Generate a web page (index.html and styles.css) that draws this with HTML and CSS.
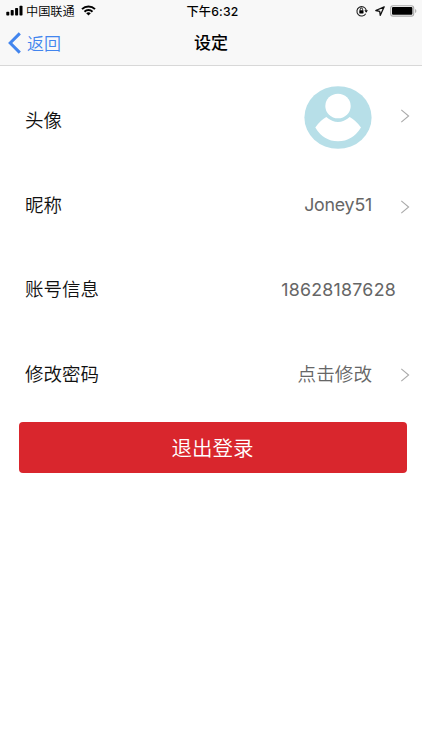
FILE: index.html
```html
<!DOCTYPE html>
<html lang="zh-CN">
<head>
<meta charset="utf-8">
<title>设定</title>
<link rel="stylesheet" href="styles.css">
</head>
<body>
<header class="header">
  <div class="status">
    <div class="status-left">
      <svg class="signal" width="17" height="11" viewBox="0 0 17 11"><rect x="0.3" y="6.7" width="3" height="3.8" rx=".7"/><rect x="4.7" y="5.1" width="3" height="5.4" rx=".7"/><rect x="9.1" y="3.1" width="3" height="7.4" rx=".7"/><rect x="13.5" y="0.8" width="3" height="9.7" rx=".7"/></svg>
      <span class="carrier">中国联通</span>
      <svg class="wifi" width="15" height="11" viewBox="0 0 15 11"><g fill="none" stroke="#000" stroke-width="2"><path d="M1 4.1a9.3 9.3 0 0 1 13 0"/><path d="M3.5 6.7a5.7 5.7 0 0 1 8 0"/></g><path d="M5.2 8.3a3.3 3.3 0 0 1 4.6 0L7.5 10.6z"/></svg>
    </div>
    <div class="time">下午6:32</div>
    <div class="status-right">
      <svg width="12" height="12" viewBox="0 0 12 12"><path d="M9.7 8.7A4.7 4.7 0 1 1 10.2 5.2" fill="none" stroke="#222" stroke-width="1.1"/><path d="M8.4 5.2h3.5l-1.7 2.5z"/><rect x="3.3" y="5.2" width="4.2" height="3.2" rx=".4"/><path d="M4.2 5.4V4.3a1.2 1.2 0 0 1 2.4 0v1.1" fill="none" stroke="#000" stroke-width=".9"/></svg>
      <svg class="location" width="10" height="10" viewBox="0 0 10 10"><path d="M9.2 .8L.8 4.5l3.9.9.6 3.9z" fill="none" stroke="#111" stroke-width="1.3" stroke-linejoin="round"/></svg>
      <svg class="battery" width="28" height="12" viewBox="0 0 28 12"><rect x=".7" y=".7" width="23" height="10.4" rx="2.4" fill="none" stroke="#aaa" stroke-width="1.1"/><rect x="2" y="2" width="20.4" height="7.8" rx="1"/><path d="M25.1 4v4q1.3-.6 1.3-2t-1.3-2z" fill="#aaa"/></svg>
    </div>
  </div>
  <nav class="nav">
    <div class="back"><svg width="13" height="22" viewBox="0 0 13 22"><path d="M11.8 1.4L2.2 11l9.6 9.6" fill="none" stroke="#4285ee" stroke-width="3"/></svg><span>返回</span></div>
    <h1 class="title">设定</h1>
    <div></div>
  </nav>
</header>
<main class="main">
  <div class="row row-avatar">
    <span class="label">头像</span>
    <svg class="avatar" width="68" height="63" viewBox="0 0 68 63"><ellipse cx="34" cy="31.5" rx="33.6" ry="31.3" fill="#b7dfe8"/><path d="M11.3 41.5Q16 34.5 22.3 31Q34 41 45.7 31Q52 34.5 57 41.5Q48.5 55.3 34 55.3T11.3 41.5z" fill="#fff"/><ellipse cx="34" cy="20.2" rx="14.7" ry="15" fill="#b7dfe8"/><ellipse cx="34" cy="20" rx="12.7" ry="12.3" fill="#fff"/></svg>
    <svg class="chevron" width="10" height="14" viewBox="0 0 10 14"><path d="M1.3 .8l7.3 6.2L1.3 13.2"/></svg>
  </div>
  <div class="row">
    <span class="label">昵称</span>
    <span class="value latin">Joney51</span>
    <svg class="chevron" width="10" height="14" viewBox="0 0 10 14"><path d="M1.3 .8l7.3 6.2L1.3 13.2"/></svg>
  </div>
  <div class="row">
    <span class="label">账号信息</span>
    <span class="value latin phone">18628187628</span>
  </div>
  <div class="row">
    <span class="label">修改密码</span>
    <span class="value">点击修改</span>
    <svg class="chevron" width="10" height="14" viewBox="0 0 10 14"><path d="M1.3 .8l7.3 6.2L1.3 13.2"/></svg>
  </div>
  <button class="logout">退出登录</button>
</main>
</body>
</html>
```

FILE: styles.css
```css
* { box-sizing: border-box; }
body {
  margin: 0;
  min-height: 750px;
  background: #fff;
  color: #111;
  font-family: Inter, "Noto Sans CJK SC", sans-serif;
}
svg { display: block; flex: none; }
.header {
  height: 66px;
  background: #f8f8f8;
  border-bottom: 1px solid #d8d8d8;
}
.status {
  display: grid;
  grid-template-columns: 1fr auto 1fr;
  height: 21px;
  padding: 1px 4px 0 6px;
  align-items: center;
  font-size: 12.2px;
  line-height: 20px;
  color: #000;
}
.status-left, .status-right { display: flex; align-items: center; }
.status-right { justify-content: flex-end; padding-bottom: 2px; }
.signal, .wifi { margin-bottom: 2px; }
.carrier { margin-left: 3px; padding-top: 1px; font-weight: 350; }
.wifi { margin-left: 6px; }
.time { padding: 1px 0 0 1px; font-weight: 500; letter-spacing: .2px; }
.location { margin-left: 7px; }
.battery { margin-left: 5px; }
.nav {
  display: grid;
  grid-template-columns: 1fr auto 1fr;
  height: 44px;
  align-items: center;
}
.back {
  display: flex;
  align-items: center;
  gap: 6px;
  padding-left: 8px;
  color: #4285ee;
  font-size: 17px;
  font-weight: 350;
  line-height: 24px;
}
.back span { padding-top: 1px; }
.back svg { margin-top: -1px; }
.title {
  margin: 0;
  font-size: 17px;
  line-height: 24px;
  font-weight: 500;
  color: #000;
}
.main { padding: 12px 14px 0 18px; }
.row {
  display: flex;
  align-items: center;
  height: 84.4px;
  padding-left: 7px;
}
.label {
  flex: 1;
  padding-top: 1px;
  font-size: 18.5px;
  font-weight: 350;
  line-height: 28px;
}
.row-avatar .label { padding-top: 0; }
.value {
  margin-right: 28px;
  padding-top: 1px;
  color: #666;
  font-size: 18.6px;
  font-weight: 350;
  line-height: 28px;
}
.latin { font-size: 17.8px; font-weight: 400; letter-spacing: -.22px; }
.phone { margin-right: 12px; padding-top: 2px; letter-spacing: .25px; }
.avatar { margin: -5px 28px 0 0; }
.chevron {
  position: relative;
  top: 2px;
  margin-right: -2px;
  fill: none;
  stroke: #aaa;
  stroke-width: 1.1;
}
.row-avatar .chevron { top: -4px; }
.logout {
  display: block;
  width: 388px;
  height: 51px;
  margin: 6.4px 0 0 .6px;
  padding: 2px 0 0;
  border: 0;
  border-radius: 4px;
  background: #d9262d;
  color: #fff;
  font-family: inherit;
  font-size: 20.5px;
  font-weight: 350;
  line-height: 49px;
}
```
